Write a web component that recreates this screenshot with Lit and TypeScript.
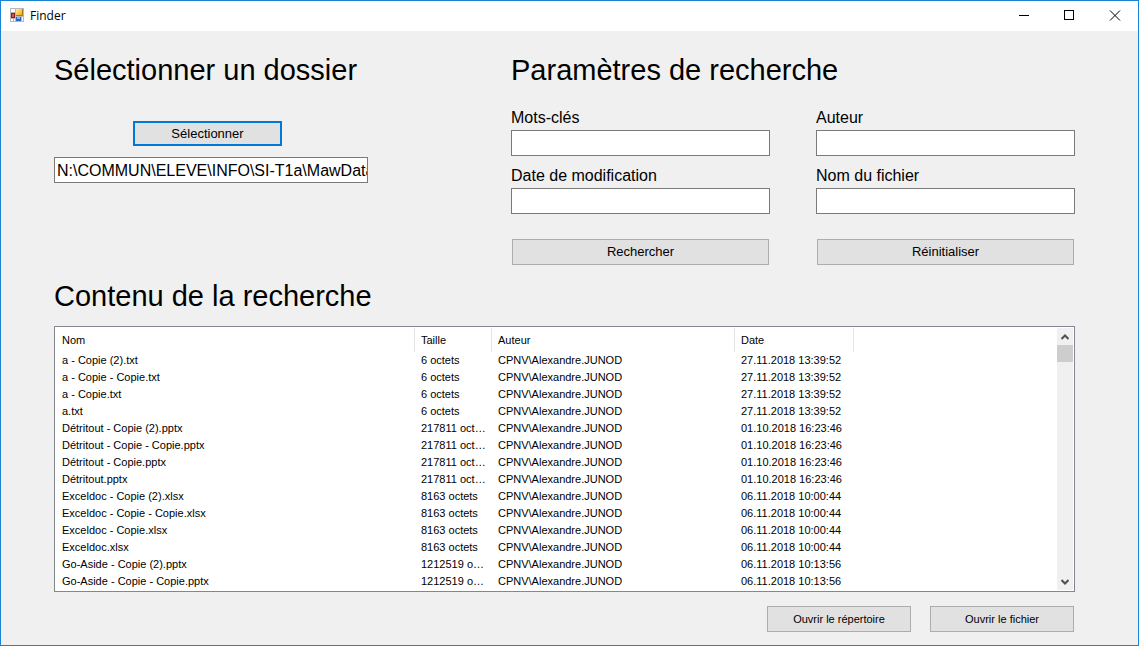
import { LitElement, html, css } from "lit";
import { customElement, state } from "lit/decorators.js";

interface FileRow {
  name: string;
  size: string;
  author: string;
  date: string;
}

const AUTHOR = "CPNV\\Alexandre.JUNOD";

function copies(names: string[], size: string, date: string): FileRow[] {
  return names.map((name) => ({ name, size, author: AUTHOR, date }));
}

const FILES: FileRow[] = [
  ...copies(
    ["a - Copie (2).txt", "a - Copie - Copie.txt", "a - Copie.txt", "a.txt"],
    "6 octets",
    "27.11.2018 13:39:52",
  ),
  ...copies(
    ["Détritout - Copie (2).pptx", "Détritout - Copie - Copie.pptx", "Détritout - Copie.pptx", "Détritout.pptx"],
    "217811 octets",
    "01.10.2018 16:23:46",
  ),
  ...copies(
    ["Exceldoc - Copie (2).xlsx", "Exceldoc - Copie - Copie.xlsx", "Exceldoc - Copie.xlsx", "Exceldoc.xlsx"],
    "8163 octets",
    "06.11.2018 10:00:44",
  ),
  ...copies(
    ["Go-Aside - Copie (2).pptx", "Go-Aside - Copie - Copie.pptx"],
    "1212519 octets",
    "06.11.2018 10:13:56",
  ),
];

@customElement("title-bar")
class TitleBar extends LitElement {
  static styles = css`
    :host {
      display: flex;
      align-items: flex-start;
      height: 30px;
      background: #fff;
      font: 12px/29px "Segoe UI", "Open Sans", sans-serif;
      color: #000;
    }
    .icon {
      width: 14px;
      height: 14px;
      margin: 7px 6px 0 9px;
    }
    .title {
      flex: 1;
    }
    .control {
      display: flex;
      align-items: center;
      justify-content: center;
      width: 46px;
      height: 29px;
      padding: 0;
      border: 0;
      background: transparent;
    }
    .glyph {
      width: 12px;
      height: 11px;
      fill: none;
      stroke: #000;
    }
  `;

  render() {
    return html`
      <svg class="icon" viewBox="0 0 14 14" shape-rendering="crispEdges" aria-hidden="true">
        <defs>
          <linearGradient id="y" x1="0" y1="0" x2="1" y2="1">
            <stop offset="0" stop-color="#fff0a0" />
            <stop offset="1" stop-color="#f0ac10" />
          </linearGradient>
        </defs>
        <rect width="14" height="14" fill="#b9b9b9" />
        <rect x="1" y="1" width="4" height="3" fill="#fff" />
        <rect x="1" y="11" width="2" height="2" fill="#fff" />
        <rect x="4" y="11" width="1" height="2" fill="#fff" />
        <rect x="12" y="9" width="1" height="4" fill="#fff" />
        <rect x="1" y="5" width="4" height="5" fill="#8e1a14" />
        <rect x="2" y="6" width="2" height="3" fill="#d4574c" />
        <rect x="6" y="1" width="7" height="7" fill="#b07a08" />
        <rect x="6" y="1" width="6" height="6" fill="url(#y)" />
        <rect x="6" y="9" width="5" height="4" fill="#2c62c8" />
        <rect x="7" y="9" width="3" height="2" fill="#84b2f4" />
      </svg>
      <span class="title">Finder</span>
      <button class="control" aria-label="Réduire">
        <svg class="glyph" viewBox="0 0 12 11" shape-rendering="crispEdges"><path d="M2 5.5H12" /></svg>
      </button>
      <button class="control" aria-label="Agrandir">
        <svg class="glyph" viewBox="0 0 12 11" shape-rendering="crispEdges"><rect x="1.5" y=".5" width="9" height="9" /></svg>
      </button>
      <button class="control" aria-label="Fermer">
        <svg class="glyph" viewBox="0 0 12 11"><path d="M1 .5L11 10.5M11 .5L1 10.5" /></svg>
      </button>
    `;
  }
}

@customElement("file-list")
class FileList extends LitElement {
  static styles = css`
    :host {
      display: flex;
      box-sizing: border-box;
      min-height: 266px;
      padding: 1px;
      overflow: hidden;
      border: 1px solid #828790;
      background: #fff;
      color: #000;
      font: 11px/17px "Liberation Sans", Arial, sans-serif;
    }
    .view {
      flex: 1;
      min-width: 0;
      overflow: hidden;
    }
    .table {
      width: 100%;
      table-layout: fixed;
      border-collapse: separate;
      border-spacing: 0;
    }
    .name {
      width: 359px;
    }
    .size {
      width: 77px;
    }
    .author {
      width: 243px;
    }
    .date {
      width: 119px;
    }
    .head,
    .cell {
      box-sizing: border-box;
      padding: 0 4px 0 6px;
      overflow: hidden;
      text-align: left;
      text-overflow: ellipsis;
      white-space: nowrap;
    }
    .head {
      height: 24px;
      border-right: 1px solid #e5e5e5;
      font-weight: normal;
    }
    .rest {
      border-right: 0;
    }
    .scroll {
      display: flex;
      flex-direction: column;
      width: 16px;
      background: #f0f0f0;
    }
    .arrow {
      display: flex;
      align-items: center;
      justify-content: center;
      height: 17px;
      padding: 0;
      border: 0;
      background: transparent;
    }
    .chevron {
      width: 8px;
      height: 6px;
      fill: none;
      stroke: #505050;
      stroke-width: 2;
    }
    .track {
      flex: 1;
    }
    .thumb {
      height: 17px;
      background: #cdcdcd;
    }
  `;

  render() {
    return html`
      <div class="view">
        <table class="table">
          <colgroup>
            <col class="name" />
            <col class="size" />
            <col class="author" />
            <col class="date" />
            <col />
          </colgroup>
          <thead>
            <tr>
              <th class="head">Nom</th>
              <th class="head">Taille</th>
              <th class="head">Auteur</th>
              <th class="head">Date</th>
              <td class="head rest"></td>
            </tr>
          </thead>
          <tbody>
            ${FILES.map(
              (f) => html`<tr>
                <td class="cell">${f.name}</td>
                <td class="cell">${f.size}</td>
                <td class="cell">${f.author}</td>
                <td class="cell">${f.date}</td>
                <td></td>
              </tr>`,
            )}
          </tbody>
        </table>
      </div>
      <div class="scroll">
        <button class="arrow" aria-label="Défiler vers le haut">
          <svg class="chevron" viewBox="0 0 8 6"><path d="M.5 5L4 1.5L7.5 5" /></svg>
        </button>
        <div class="track"><div class="thumb"></div></div>
        <button class="arrow" aria-label="Défiler vers le bas">
          <svg class="chevron" viewBox="0 0 8 6"><path d="M.5 1L4 4.5L7.5 1" /></svg>
        </button>
      </div>
    `;
  }
}

@customElement("app-root")
class AppRoot extends LitElement {
  @state() private folder = "N:\\COMMUN\\ELEVE\\INFO\\SI-T1a\\MawData";

  static styles = css`
    :host {
      display: flex;
      flex-direction: column;
      box-sizing: border-box;
      min-height: 100vh;
      border: 1px solid #1883d7;
      background: #f0f0f0;
      color: #000;
      font: 16px/18px "Liberation Sans", Arial, sans-serif;
    }
    .content {
      display: flex;
      flex: 1;
      flex-direction: column;
      padding: 23px 63px 13px 53px;
    }
    .top {
      display: grid;
      grid-template-columns: 314fr 564fr;
      column-gap: 143px;
      margin-bottom: 15px;
    }
    .title {
      margin: 0;
      font-size: 29px;
      line-height: 32px;
      font-weight: normal;
      white-space: nowrap;
    }
    .folder {
      display: flex;
      flex-direction: column;
      min-width: 0;
    }
    .input {
      box-sizing: border-box;
      width: 100%;
      height: 26px;
      padding: 1px 0 0 2px;
      border: 1px solid #7a7a7a;
      border-radius: 0;
      outline: 0;
      background: #fff;
      color: #000;
      font: inherit;
    }
    .button {
      box-sizing: border-box;
      height: 26px;
      padding: 0;
      border: 1px solid #adadad;
      border-radius: 0;
      background: #e1e1e1;
      color: #000;
      font: 13px/18px "Liberation Sans", Arial, sans-serif;
    }
    .select {
      width: 149px;
      height: 25px;
      margin: 35px 0 11px 79px;
      border: 2px solid #0078d7;
    }
    .fields {
      display: grid;
      grid-template-columns: 1fr 1fr;
      gap: 11px 46px;
      margin-top: 23px;
    }
    .field {
      display: flex;
      flex-direction: column;
      gap: 3px;
    }
    .actions {
      display: grid;
      grid-template-columns: 1fr 1fr;
      gap: 48px;
      margin: 25px 1px 0;
    }
    .list {
      flex: 1;
      margin: 14px 0;
    }
    .footer {
      display: flex;
      justify-content: flex-end;
      gap: 19px;
      padding-right: 1px;
    }
    .open {
      width: 144px;
      font-size: 11px;
    }
  `;

  private field(id: string, label: string) {
    return html`<div class="field">
      <label for=${id}>${label}</label>
      <input class="input" id=${id} type="text" />
    </div>`;
  }

  render() {
    return html`
      <title-bar></title-bar>
      <main class="content">
        <div class="top">
          <section class="folder">
            <h2 class="title">Sélectionner un dossier</h2>
            <button class="button select">Sélectionner</button>
            <input class="input" type="text" aria-label="Dossier" .value=${this.folder} />
          </section>
          <section>
            <h2 class="title">Paramètres de recherche</h2>
            <div class="fields">
              ${this.field("keywords", "Mots-clés")} ${this.field("author", "Auteur")}
              ${this.field("modified", "Date de modification")} ${this.field("filename", "Nom du fichier")}
            </div>
            <div class="actions">
              <button class="button">Rechercher</button>
              <button class="button">Réinitialiser</button>
            </div>
          </section>
        </div>
        <h2 class="title">Contenu de la recherche</h2>
        <file-list class="list"></file-list>
        <div class="footer">
          <button class="button open">Ouvrir le répertoire</button>
          <button class="button open">Ouvrir le fichier</button>
        </div>
      </main>
    `;
  }
}
